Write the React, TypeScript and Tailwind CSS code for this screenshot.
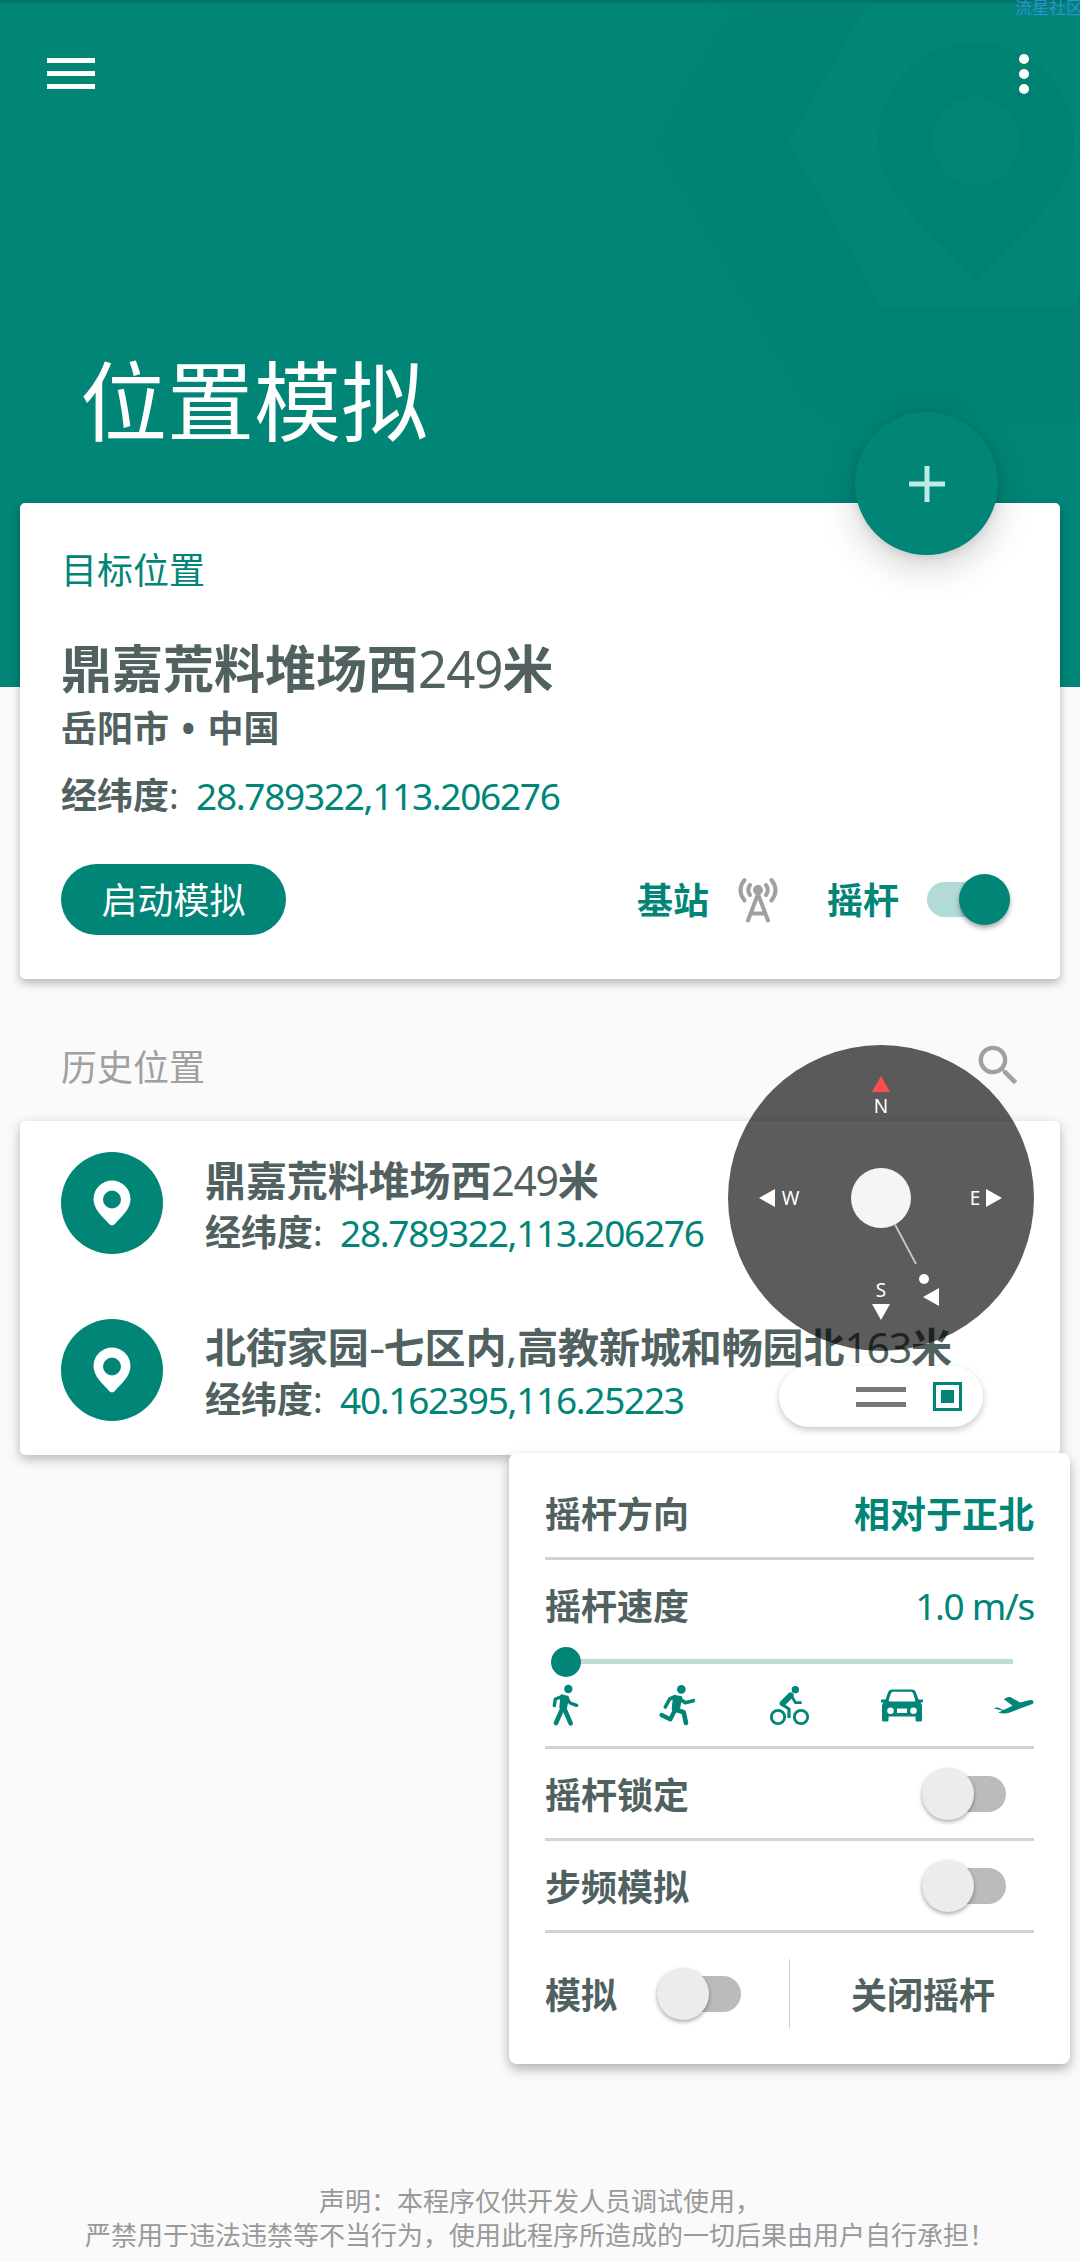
import { MdSearch } from "react-icons/md";
import type { ReactNode } from "react";

function HeaderArt() {
  return (
    <svg className="absolute inset-0" width="1080" height="687" viewBox="0 0 1080 687">
      <defs>
        <filter id="soft" x="-20%" y="-20%" width="140%" height="140%">
          <feGaussianBlur stdDeviation="12" />
        </filter>
      </defs>
      <polygon
        points="662,142 819,414 1133,414 1290,142 1133,-130 819,-130"
        fill="#008173"
        filter="url(#soft)"
      />
      <polygon points="788,142 882,307 1070,307 1164,142 1070,-23 882,-23" fill="#008577" />
      <path
        fillRule="evenodd"
        fill="#008173"
        d="M976 42a98 98 0 0 0-98 98c0 58 60 96 98 140c38-44 98-82 98-140a98 98 0 0 0-98-98zM976 97a44 44 0 1 1 0 88a44 44 0 0 1 0-88z"
      />
    </svg>
  );
}

function AntennaIcon() {
  return (
    <svg width="40" height="46" viewBox="0 0 40 46" fill="none" stroke="#a0a0a0" strokeWidth="4" strokeLinecap="round">
      <circle cx="20" cy="13" r="5" fill="#a0a0a0" stroke="none" />
      <path d="M20 17L10 43.500M20 17L30 43.500M13.500 36.500H26.500" />
      <path d="M12 8Q8.500 13 12 18M28 8Q31.500 13 28 18" />
      <path d="M6.500 3Q-1.500 13 6.500 23.500M33.500 3Q41.500 13 33.500 23.500" />
    </svg>
  );
}

function PinBadge() {
  return (
    <div className="flex size-[102px] shrink-0 items-center justify-center rounded-full bg-[#008577]">
      <svg width="38" height="46" viewBox="0 0 38 46">
        <path
          fillRule="evenodd"
          fill="#fff"
          d="M19 0.500A18.500 18.500 0 0 0 0.500 19c0 11 10 18 15.500 25q3 2.800 6 0C27.500 37 37.500 30 37.500 19A18.500 18.500 0 0 0 19 0.500zM19 10.500a9 9 0 1 1 0 18a9 9 0 0 1 0-18z"
        />
      </svg>
    </div>
  );
}

function Switch({ on = false }: { on?: boolean }) {
  return on ? (
    <div className="flex h-[35px] w-[83px] items-center justify-end rounded-full bg-[#b2dad6]">
      <div className="size-[51px] shrink-0 rounded-full bg-[#008577] shadow-[0_3px_5px_rgba(0,0,0,0.35)]" />
    </div>
  ) : (
    <div className="mb-[2px] flex h-[36px] w-[84px] items-center rounded-full bg-[#bbbbbb]">
      <div className="size-[52px] shrink-0 rounded-full bg-[#ececec] shadow-[0_2px_4px_rgba(0,0,0,0.35)]" />
    </div>
  );
}

function Coordinates({ value }: { value: string }) {
  return (
    <div className="flex h-[50px] items-center text-[36px] leading-[50px]">
      <span className="font-bold">经纬度</span>
      <span className="w-[27px]">:</span>
      <span className="text-[37px] tracking-[-1.3px] text-[#008577]">{value}</span>
    </div>
  );
}

function HistoryRow({ title, coords }: { title: ReactNode; coords: string }) {
  return (
    <div className="flex h-[167px] items-start pl-[41px] pt-[31px]">
      <PinBadge />
      <div className="ml-[42px]">
        <div className="h-[56px] whitespace-nowrap text-[41px] font-bold leading-[56px] tracking-[-0.1px]">{title}</div>
        <Coordinates value={coords} />
      </div>
    </div>
  );
}

function Joystick() {
  return (
    <svg
      className="absolute left-[728px] top-[1045px]"
      width="306"
      height="306"
      viewBox="728 1045 306 306"
      fill="#fff"
      fontFamily='"Noto Sans", sans-serif'
      fontSize="19"
      textAnchor="middle"
    >
      <circle cx="881" cy="1198" r="153" fill="#000" fillOpacity="0.64" />
      <path d="M881 1076L890 1092H872z" fill="#ff4d4d" />
      <path d="M759 1198L775 1189V1207zM1002 1198L986 1189V1207zM881 1320L890 1304H872zM923 1297L939 1288V1306z" />
      <path d="M895 1224.500L916 1264" stroke="#ccc" strokeWidth="1.700" />
      <circle cx="881" cy="1198" r="30" fill="#f5f5f5" />
      <circle cx="924" cy="1279" r="5" />
      <text x="881" y="1112.500">N</text>
      <text x="790.500" y="1205">W</text>
      <text x="975" y="1205">E</text>
      <text x="881" y="1297">S</text>
    </svg>
  );
}

function HandlePill() {
  return (
    <div className="absolute left-[779px] top-[1366px] flex h-[61px] w-[204px] items-center rounded-full bg-white pl-[77px] shadow-[0_3px_7px_rgba(0,0,0,0.22)]">
      <div className="flex w-[50px] flex-col gap-[10px]">
        <div className="h-[5px] bg-[#777]" />
        <div className="h-[5px] bg-[#777]" />
      </div>
      <div className="ml-[27px] flex size-[29px] items-center justify-center border-[3px] border-[#008577]">
        <div className="size-[13px] bg-[#008577]" />
      </div>
    </div>
  );
}

function WalkIcon() {
  return (
    <svg width="27" height="43" viewBox="36 132 81 129" fill="none" stroke="#008577" strokeLinecap="round" strokeLinejoin="round">
      <circle cx="85" cy="147" r="12.500" fill="#008577" stroke="none" />
      <path d="M66 168L82 172L76 204L63 202z" fill="#008577" strokeWidth="10" />
      <path d="M66 170L46 177L43 197" strokeWidth="10" />
      <path d="M82 176L90 189L110 196" strokeWidth="10" />
      <path d="M67 206L48 249M72 204L92 250" strokeWidth="14" />
    </svg>
  );
}

function RunIcon() {
  return (
    <svg width="37" height="43" viewBox="357 132 111 129" fill="none" stroke="#008577" strokeLinecap="round" strokeLinejoin="round">
      <circle cx="424" cy="148" r="13" fill="#008577" stroke="none" />
      <path d="M404 171L422 173L415 205L400 207z" fill="#008577" strokeWidth="10" />
      <path d="M405 170L389 177L376 201" strokeWidth="11" />
      <path d="M421 178L436 188L460 182" strokeWidth="11" />
      <path d="M404 212L391 238L365 225" strokeWidth="13" />
      <path d="M410 210L431 217L438 249" strokeWidth="14" />
    </svg>
  );
}

function BikeIcon() {
  return (
    <svg width="41" height="43" viewBox="687 132 123 129" fill="none" stroke="#008577" strokeLinejoin="round">
      <circle cx="714" cy="231" r="20" strokeWidth="8.500" />
      <circle cx="783" cy="231" r="20" strokeWidth="8.500" />
      <circle cx="766" cy="149" r="11" fill="#008577" stroke="none" />
      <path d="M752 166L728 190" strokeWidth="18" strokeLinecap="round" />
      <path d="M755 168L766 188H785" strokeWidth="8" />
      <path d="M724 192L747 207V234" strokeWidth="9.500" />
    </svg>
  );
}

function CarIcon() {
  return (
    <svg width="42" height="33" viewBox="0 0 42 33">
      <path
        fillRule="evenodd"
        fill="#008577"
        d="M11 0.500h20q3 0 4 3l2.500 7H42v3h-2.500Q41 15 41 17v14q0 1.500-1.500 1.500h-3.500q-1.500 0-1.500-1.500v-3.500h-27V31q0 1.500-1.500 1.500H2.500Q1 32.500 1 31V17q0-2 1.500-3.500H0v-3h4.500l2.500-7q1-3 4-3zM12 2.800q-1.500 0-2 1.500L7.700 11q-0.300 1.500 1.300 1.500h24q1.600 0 1.300-1.500L32 4.300Q31.500 2.800 30 2.800zM9.500 18.500a3.300 3.300 0 1 0 0 6.600a3.300 3.300 0 0 0 0-6.600zM32.500 18.500a3.300 3.300 0 1 0 0 6.600a3.300 3.300 0 0 0 0-6.600zM16 19.500v4.600h10v-4.600z"
      />
    </svg>
  );
}

function PlaneIcon() {
  return (
    <svg width="41" height="19" viewBox="608 168 126 58">
      <path
        fill="#008577"
        d="M610 206L622 202L636 209L642 210L668 198L641 177L655 171H661L692 188L722 180Q732 179 733 186Q733 191 725 194L655 220Q645 223 624 219L637 212z"
      />
    </svg>
  );
}

function SpeedModes() {
  return (
    <div className="flex h-[43px] items-center pl-[7px]">
      <WalkIcon />
      <div className="ml-[80px]">
        <RunIcon />
      </div>
      <div className="ml-[73px]">
        <BikeIcon />
      </div>
      <div className="ml-[71px]">
        <CarIcon />
      </div>
      <div className="ml-[70px]">
        <PlaneIcon />
      </div>
    </div>
  );
}

function SettingsPanel() {
  return (
    <div className="absolute left-[509px] top-[1453px] flex h-[611px] w-[561px] flex-col rounded-[8px] bg-white px-[36px] text-[36px] font-bold leading-[48px] shadow-[0_5px_12px_rgba(0,0,0,0.3)]">
      <div className="flex h-[107px] items-center justify-between border-b-[3px] border-[#d3d3d3] pt-[20px]">
        <span>摇杆方向</span>
        <span className="text-[#008577]">相对于正北</span>
      </div>
      <div className="flex h-[189px] flex-col border-b-[3px] border-[#d3d3d3] pt-[23px]">
        <div className="flex h-[48px] justify-between">
          <span>摇杆速度</span>
          <span className="-mt-[1px] text-[37px] font-normal tracking-[-1.3px] text-[#008577]">1.0 m/s</span>
        </div>
        <div className="mt-[15px] flex h-[31px] items-center pl-[6px]">
          <div className="size-[30px] rounded-full bg-[#008577]" />
          <div className="h-[5px] w-[432px] bg-[#bfdcd8]" />
        </div>
        <div className="mt-[7px]">
          <SpeedModes />
        </div>
      </div>
      <div className="flex h-[92px] items-center justify-between border-b-[3px] border-[#d3d3d3] pr-[28px] pt-[2px]">
        <span className="pt-[2px]">摇杆锁定</span>
        <Switch />
      </div>
      <div className="flex h-[92px] items-center justify-between border-b-[3px] border-[#d3d3d3] pr-[28px] pt-[2px]">
        <span className="pt-[2px]">步频模拟</span>
        <Switch />
      </div>
      <div className="flex h-[122px] items-center pt-[2px]">
        <span className="pt-[2px]">模拟</span>
        <div className="ml-[40px]">
          <Switch />
        </div>
        <div className="mb-[3px] ml-[48px] h-[69px] w-px bg-[#d0d0d0]" />
        <span className="ml-[61px] pt-[2px]">关闭摇杆</span>
      </div>
    </div>
  );
}

export default function App() {
  return (
    <div className="relative h-[2262px] w-[1080px] overflow-hidden bg-[#fafafa] font-['Noto_Sans','Noto_Sans_CJK_SC',sans-serif] text-[#50615f]">
      <header className="relative h-[503px]">
        <div className="absolute inset-x-0 top-0 h-[687px] bg-[#008577]">
          <HeaderArt />
          <div className="absolute inset-x-0 top-0 h-[4px] bg-gradient-to-b from-[#00705f] to-[#008577]" />
        </div>
        <span className="absolute left-[1015px] top-[-2px] whitespace-nowrap text-[17px] leading-[20px] text-[#2f8fd6]">
          流星社区
        </span>
        <div className="relative flex h-[104px] items-start justify-between pl-[47px] pr-[51px] pt-[54px]">
          <div className="flex w-[48px] flex-col gap-[8px] pt-[4px]">
            <div className="h-[5px] bg-white" />
            <div className="h-[5px] bg-white" />
            <div className="h-[5px] bg-white" />
          </div>
          <div className="flex flex-col gap-[5px]">
            <div className="size-[10px] rounded-full bg-white" />
            <div className="size-[10px] rounded-full bg-white" />
            <div className="size-[10px] rounded-full bg-white" />
          </div>
        </div>
        <h1 className="relative ml-[80px] mt-[237px] text-[87px] leading-[120px] text-white">位置模拟</h1>
      </header>

      <section className="relative mx-[20px] h-[476px] rounded-[5px] bg-white px-[41px] shadow-[0_4px_10px_rgba(0,0,0,0.28)]">
        <div className="pt-[44px] text-[36px] leading-[48px] text-[#008577]">目标位置</div>
        <div className="mt-[40px] text-[51px] font-bold leading-[66px]">
          鼎嘉荒料堆场西<span className="font-normal tracking-[-1px]">249</span>米
        </div>
        <div className="mt-[2px] text-[36px] font-bold leading-[52px]">
          岳阳市<span className="mx-[12.5px]">•</span>中国
        </div>
        <div className="mt-[16px]">
          <Coordinates value="28.789322,113.206276" />
        </div>
        <div className="mt-[43px] flex h-[71px] items-center">
          <div className="flex h-[71px] w-[225px] items-center justify-center rounded-full bg-[#008577] pt-[2px] text-[36px] text-white">
            启动模拟
          </div>
          <span className="ml-[351px] pt-[3px] text-[36px] font-bold text-[#008577]">基站</span>
          <div className="ml-[29px]">
            <AntennaIcon />
          </div>
          <span className="ml-[49px] pt-[3px] text-[36px] font-bold text-[#008577]">摇杆</span>
          <div className="ml-[28px]">
            <Switch on />
          </div>
        </div>
      </section>

      <div className="absolute left-[855px] top-[412px] flex size-[143px] items-center justify-center rounded-full bg-[#008577] shadow-[0_12px_36px_rgba(0,0,0,0.18),0_2px_10px_rgba(0,0,0,0.10)]">
        <svg width="36" height="36" viewBox="0 0 36 36" stroke="#bdeae5" strokeWidth="5">
          <path d="M18 0V36M0 18H36" />
        </svg>
      </div>

      <div className="flex h-[142px] items-center justify-between pl-[61px] pr-[55px] pt-[35px] text-[#a0a0a0]">
        <span className="text-[36px]">历史位置</span>
        <MdSearch size={53} className="mb-[5px]" />
      </div>

      <section className="mx-[20px] h-[334px] rounded-[5px] bg-white shadow-[0_4px_12px_rgba(0,0,0,0.28)]">
        <HistoryRow
          title={
            <>
              鼎嘉荒料堆场西<span className="font-normal tracking-[-1.3px]">249</span>米
            </>
          }
          coords="28.789322,113.206276"
        />
        <HistoryRow
          title={
            <>
              北街家园<span className="inline-block w-[15px] origin-left scale-x-125 font-normal">-</span>七区内
              <span className="font-normal">,</span>
              高教新城和畅园北<span className="font-normal tracking-[-1.3px]">163</span>米
            </>
          }
          coords="40.162395,116.25223"
        />
      </section>

      <Joystick />
      <HandlePill />
      <SettingsPanel />

      <footer className="absolute inset-x-0 top-[2184px] text-center text-[26px] leading-[34px] text-[#999]">
        <p>声明：本程序仅供开发人员调试使用，</p>
        <p>严禁用于违法违禁等不当行为，使用此程序所造成的一切后果由用户自行承担！</p>
      </footer>
    </div>
  );
}
